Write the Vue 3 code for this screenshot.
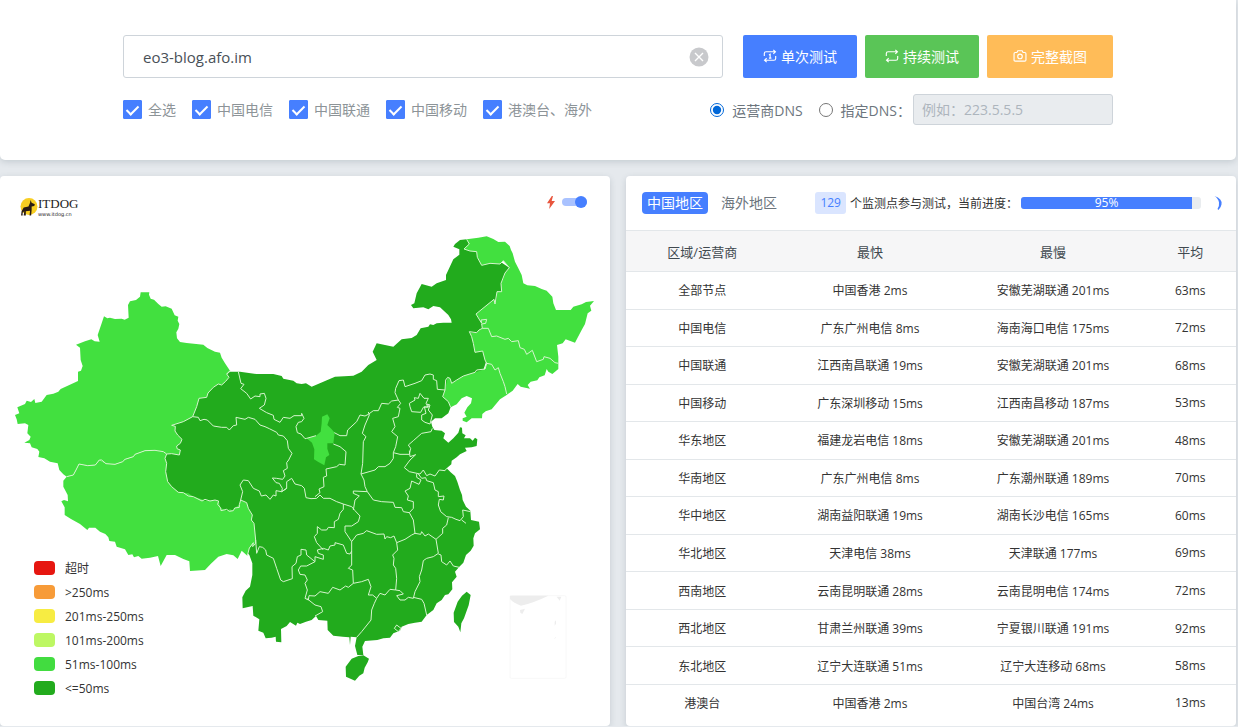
<script setup>
import { ref } from 'vue'

const host = ref('eo3-blog.afo.im')
const dns = ref('isp')
const tab = ref('cn')
const live = ref(true)
const progress = 95

const lines = ref([
  { name: '全选', on: true },
  { name: '中国电信', on: true },
  { name: '中国联通', on: true },
  { name: '中国移动', on: true },
  { name: '港澳台、海外', on: true },
])

const legend = [
  { label: '超时', cls: 'timeout' },
  { label: '>250ms', cls: 'slowest' },
  { label: '201ms-250ms', cls: 'slow' },
  { label: '101ms-200ms', cls: 'medium' },
  { label: '51ms-100ms', cls: 'good' },
  { label: '<=50ms', cls: 'best' },
]

const rows = [
  ['全部节点', '中国香港 2ms', '安徽芜湖联通 201ms', '63ms'],
  ['中国电信', '广东广州电信 8ms', '海南海口电信 175ms', '72ms'],
  ['中国联通', '江西南昌联通 19ms', '安徽芜湖联通 201ms', '68ms'],
  ['中国移动', '广东深圳移动 15ms', '江西南昌移动 187ms', '53ms'],
  ['华东地区', '福建龙岩电信 18ms', '安徽芜湖联通 201ms', '48ms'],
  ['华南地区', '广东广州电信 8ms', '广东潮州联通 189ms', '70ms'],
  ['华中地区', '湖南益阳联通 19ms', '湖南长沙电信 165ms', '60ms'],
  ['华北地区', '天津电信 38ms', '天津联通 177ms', '69ms'],
  ['西南地区', '云南昆明联通 28ms', '云南昆明电信 174ms', '72ms'],
  ['西北地区', '甘肃兰州联通 39ms', '宁夏银川联通 191ms', '92ms'],
  ['东北地区', '辽宁大连联通 51ms', '辽宁大连移动 68ms', '58ms'],
  ['港澳台', '中国香港 2ms', '中国台湾 24ms', '13ms'],
]

// Provinces answering within 50ms, drawn as one land mass
const land = [
  'M690 605L720 605 770 612 820 612 845 618 850 626 880 632 890 640 905 642 918 640 935 650 970 635 1005 620 1060 617 1085 605 1105 585 1130 570 1118 545 1130 520 1155 525 1180 530 1205 508 1235 504 1250 495 1262 475 1285 470 1290 463 1300 465 1310 460 1330 458 1355 458 1353 448 1345 435 1320 412 1300 408 1285 418 1270 412 1240 415 1233 405 1243 400 1250 370 1265 342 1295 350 1310 340 1338 330 1338 315 1345 300 1360 268 1378 254 1378 238 1360 230 1365 222 1380 210 1400 208 1528 293 1500 450 1450 600 1352 712 1345 730 1325 745 1305 745 1293 755 1297 770 1303 780 1325 782 1335 790 1330 805 1345 818 1360 805 1375 788 1380 772 1386 773 1387 790 1397 796 1392 805 1410 805 1418 812 1425 803 1432 808 1430 828 1415 832 1395 833 1400 843 1380 853 1370 862 1355 872 1354 883 1340 895 1352 907 1365 918 1372 935 1380 960 1386 975 1388 990 1398 1010 1411 1022 1413 1050 1437 1055 1440 1078 1425 1090 1420 1105 1421 1127 1412 1142 1398 1155 1390 1178 1378 1190 1365 1205 1370 1220 1356 1237 1357 1258 1345 1273 1335 1275 1325 1290 1310 1300 1300 1320 1280 1335 1265 1355 1245 1358 1225 1362 1205 1370 1200 1382 1180 1390 1170 1403 1150 1405 1132 1410 1095 1413 1087 1430 1090 1455 1072 1455 1065 1428 1070 1402 1052 1400 1050 1425 1048 1402 1028 1400 1000 1397 983 1380 982 1352 955 1350 948 1338 935 1350 918 1355 900 1362 892 1358 888 1367 870 1356 860 1368 843 1377 844 1417 828 1415 827 1400 815 1403 797 1405 790 1388 775 1382 778 1348 760 1337 758 1308 728 1315 727 1282 737 1262 750 1250 757 1215 757 1180 748 1155 650 1050 500 980 450 850 515 766 578 700Z',
  'M1055 1466L1075 1458 1090 1456 1107 1466 1103 1477 1094 1493 1090 1510 1078 1517 1065 1532 1038 1520 1037 1490Z',
  'M1400 1265L1412 1275 1406 1306 1392 1345 1384 1360 1381 1387 1375 1370 1362 1356 1361 1328 1373 1295 1386 1277Z',
]

// Provinces in the 51ms-100ms band: Xinjiang, Tibet, the north-east and Ningxia
const lighter = [
  'M45 735L58 730 52 712 75 702 80 692 93 696 103 687 106 699 125 695 140 675 160 671 175 665 182 657 234 633 234 605 243 602 248 588 242 570 240 533 228 524 255 514 274 508 284 514 299 515 293 495 305 460 312 439 322 445 330 443 345 447 365 446 374 449 386 443 384 405 390 394 408 390 420 380 422 367 448 367 447 374 452 386 462 389 475 402 485 410 497 409 515 416 524 436 535 440 533 452 538 462 535 476 529 487 531 505 540 516 560 519 610 524 622 534 645 545 660 548 665 563 675 580 690 602 680 612 687 622 677 634 665 645 655 642 640 652 624 669 620 682 597 685 590 710 578 740 550 755 515 766 526 769 525 783 533 795 546 808 541 820 530 828 531 836 541 840 538 855 515 851 500 852 490 845 465 841 435 842 405 853 400 860 375 868 368 875 345 883 318 881 298 870 286 885 263 887 237 882 228 900 220 915 200 920 190 913 178 900 173 880 150 875 133 865 115 861 118 845 112 837 95 832 90 820 73 818 88 810 92 800 82 790 85 765 75 760 53 762 50 748Z',
  'M200 920L190 932 190 950 203 975 204 994 192 990 184 994 194 1012 194 1035 213 1047 240 1062 262 1080 267 1073 286 1073 300 1085 316 1092 325 1102 328 1113 345 1115 350 1130 375 1138 385 1155 397 1153 402 1162 415 1158 425 1166 450 1163 474 1158 482 1188 500 1155 525 1155 550 1167 568 1174 570 1203 615 1200 632 1182 655 1160 680 1152 700 1156 713 1167 725 1142 742 1157 748 1134 767 1120 767 1110 762 1060 754 1050 757 1035 745 1015 740 998 722 990 718 1004 704 1014 700 1022 690 1018 680 1022 662 1014 656 993 645 990 615 993 606 988 580 980 565 970 550 968 535 965 515 950 503 935 497 905 500 880 495 865 500 852 490 845 465 841 435 842 405 853 400 860 375 868 368 875 345 883 318 881 298 870 286 885 263 887 237 882 228 900 220 915Z',
  'M1400 208L1435 203 1460 199 1480 207 1495 216 1515 215 1529 228 1533 240 1538 250 1545 275 1555 295 1565 315 1570 340 1582 346 1605 348 1625 357 1640 362 1657 380 1660 400 1668 420 1712 420 1720 410 1745 403 1758 396 1782 393 1770 407 1774 422 1763 430 1755 462 1745 480 1732 505 1725 518 1697 508 1688 520 1671 525 1675 560 1675 597 1657 612 1645 605 1640 597 1634 616 1618 622 1612 631 1592 635 1583 645 1590 656 1562 650 1553 642 1538 662 1520 675 1500 688 1475 718 1457 724 1447 732 1446 745 1415 745 1400 757 1388 752 1388 745 1400 740 1393 728 1402 712 1413 700 1416 685 1400 678 1385 685 1370 703 1352 712 1345 695 1328 680 1335 660 1343 622 1350 625 1355 640 1370 630 1390 618 1430 605 1455 597 1460 580 1453 565 1448 543 1425 547 1420 520 1415 500 1408 485 1415 488 1430 488 1437 480 1447 475 1445 460 1436 443 1428 432 1455 410 1482 388 1485 402 1490 385 1491 365 1505 365 1503 340 1512 322 1515 309 1528 293 1510 272 1500 282 1470 280 1445 286 1432 262 1430 245 1410 243 1392 237 1408 222Z',
  'M966 740L982 733 989 745 982 765 995 778 1004 788 1000 820 982 820 982 836 988 855 978 862 973 886 955 876 942 868 943 838 936 818 920 805 948 797 962 785 965 760Z',
]

// Lines shared by neighbouring provinces
const borders = [
  'M690 602L680 612 687 622 677 634 665 645 655 642 640 652 624 669 620 682 597 685 590 710 578 740 550 755 515 766 526 769 525 783 533 795 546 808 541 820 530 828 531 836 541 840 538 855 515 851 500 852',
  'M500 852L490 845 465 841 435 842 405 853 400 860 375 868 368 875 345 883 318 881 305 870 298 870 286 885 263 887 237 882 228 900 220 915 200 920',
  'M500 852L495 865 500 880 497 905 503 935 515 950 535 967 550 968 565 978 580 980 606 993 615 988 630 993 645 990 656 993 653 1003 662 1014 663 1022 680 1018 688 1024 700 1022 704 1014 718 1012 718 1004 722 990 740 998 745 1015 757 1035 754 1050 762 1060 767 1110 767 1120 758 1130 760 1118 748 1134 742 1157',
  'M715 605L723 640 732 643 722 656 740 670 752 687 765 678 780 680 780 672 793 670 798 685 793 705 778 715 800 728 820 736 822 748 840 757 850 742 870 745 882 737 905 737 905 730 912 745 905 755 895 757 888 770 892 788 903 792 915 806 920 805 948 797',
  'M578 740L595 742 600 752 612 748 622 750 640 768 665 772 680 772 688 780 700 767 710 765 708 742 735 748 745 742 765 748 780 765 795 770 808 776 830 787 835 795 850 798 862 812 865 835 876 850 866 870 860 878 862 895 850 902 855 918 848 928 830 925 817 924 828 938 838 940 847 955 845 965 860 955',
  'M722 990L728 965 720 945 730 930 745 932 760 955 778 963 784 978 798 975 810 988 820 975 828 978 828 962 845 965 860 955 860 935 875 925 885 942 905 947 913 955 918 983 933 986 950 985 960 975 970 985 990 985 1010 995 1030 1002',
  'M1000 822L1020 830 1038 845 1035 885 1018 883 1010 890 978 897 980 918 970 922 972 950 957 957 960 968 945 980',
  'M1003 788L1020 797 1040 797 1043 780 1070 755 1080 735 1095 738 1105 733 1120 722 1135 722 1145 700 1165 702 1175 693 1195 690 1185 668 1187 655 1197 632 1210 630 1215 650 1245 640 1265 632 1275 615 1290 612 1300 615 1300 628 1310 632 1312 658 1335 660',
  'M1105 726L1108 735 1095 765 1087 790 1098 800 1090 815 1088 880 1083 912 1092 930 1095 950 1102 965',
  'M1195 690L1202 700 1192 712 1200 715 1195 740 1178 745 1185 770 1175 785 1193 800 1187 830 1180 848 1180 865 1170 880 1155 890 1135 890 1125 900 1083 912',
  'M1180 848L1200 853 1228 853 1232 835 1225 825 1240 812 1265 790 1293 785 1297 775',
  'M1228 842L1230 860 1247 854 1230 870 1213 893 1228 905 1260 912 1270 900 1280 917 1290 912 1305 918 1318 900 1335 902 1340 895',
  'M1230 710L1228 700 1245 690 1243 683 1255 685 1260 670 1272 685 1285 685 1278 700 1288 710 1270 712 1262 727 1235 725Z',
  'M1273 710L1283 712 1280 702 1290 705 1285 720 1297 735 1290 762 1275 757 1265 750 1265 735 1278 730Z',
  'M1250 912L1250 922 1263 930 1257 943 1235 933 1230 955 1215 963 1225 978 1222 990 1240 995 1240 1015 1228 1028 1240 1050 1245 1090 1262 1093 1265 1085 1275 1098 1285 1092 1308 1108 1315 1150 1300 1160 1280 1165 1270 1172 1265 1200 1258 1220 1260 1235 1245 1265 1240 1285',
  'M1102 965L1120 990 1145 995 1180 997 1185 1012 1205 1013 1210 1025 1228 1028',
  'M1255 912L1265 925 1277 923 1280 932 1300 938 1305 960 1315 965 1315 980 1332 978 1330 990 1318 988 1315 1005 1322 1025 1340 1040 1355 1042 1368 1048 1380 1052 1390 1040 1388 1020 1412 1025M1385 1050L1398 1060M1345 1043L1340 1065 1328 1075 1328 1090 1308 1108',
  'M1315 1152L1323 1155 1325 1175 1340 1185 1350 1173 1360 1188 1378 1192M1240 1282L1265 1288 1272 1300 1280 1335',
  'M1240 1285L1225 1282 1215 1290 1200 1290 1190 1277 1210 1272 1200 1262 1187 1260 1170 1258 1155 1275 1140 1270 1130 1285',
  'M1245 1090L1235 1095 1215 1108 1190 1118 1193 1140 1178 1155 1182 1165 1180 1185 1187 1195 1190 1225 1187 1260M1190 1118L1182 1098 1172 1103 1160 1100 1155 1107 1152 1092 1130 1093 1100 1082 1090 1090 1070 1095 1055 1115',
  'M1130 1285L1118 1275 1105 1275 1113 1250 1105 1228 1085 1235 1060 1240 1058 1200 1045 1195 1055 1185 1055 1115M1130 1285L1123 1300 1115 1320 1113 1350 1085 1385 1070 1402',
  'M1060 1240L1045 1252 1037 1248 1020 1260 998 1252 985 1270 960 1265 945 1278 927 1277 925 1290 915 1285 922 1260 915 1240 922 1230 915 1215 900 1213 895 1200 902 1188 920 1188 945 1175',
  'M920 1285L945 1305 963 1310 968 1325 945 1338M945 1175L945 1160 970 1168 970 1155 955 1150 952 1140 970 1135 985 1140 990 1128 1005 1125 1005 1118 1030 1125 1040 1150 1050 1152 1055 1143',
  'M970 1140L950 1118 943 1100 952 1090 952 1070 965 1080 980 1080 985 1072 1003 1073 1003 1055 1015 1048 1020 1030 1030 1018 1030 1002 1055 1010 1065 1022 1080 1038 1075 1055 1055 1068 1035 1068 1035 1085 1055 1115',
  'M1060 1020L1065 990 1078 978 1060 970 1060 963 1102 965M767 1110L770 1150 778 1130 788 1132 797 1140 800 1155 820 1165 830 1195 842 1230 850 1235 877 1226 876 1190 888 1180 892 1160 903 1155 903 1138 918 1140 920 1155 945 1175',
  'M1447 475L1465 475 1475 500 1490 498 1515 508 1525 505 1535 515 1555 512 1560 533 1573 538 1580 553 1597 541 1610 575 1630 568 1632 560 1650 565 1665 578 1675 580',
  'M1460 580L1475 583 1485 600 1495 593 1500 610 1510 635 1515 650 1520 672',
  'M1400 208L1408 222 1392 237 1410 243 1430 245 1432 262 1445 286 1470 280 1500 282 1510 272 1528 293 1515 309 1503 340 1505 365 1491 365 1485 402 1482 388 1455 410 1428 432 1445 460 1443 450 1460 448 1457 460 1445 462 1447 475 1437 480 1430 488 1408 485 1415 500 1420 520 1425 547 1448 543 1455 570 1460 580 1455 597 1430 600 1425 607 1390 618 1370 630 1355 640 1350 625 1343 622 1337 630 1335 660 1328 680 1345 695 1352 712',
  'M1183 1375L1190 1365 1203 1375 1195 1385Z',
]
</script>

<template>
  <div class="page">
    <form class="card query" @submit.prevent>
      <div class="query-inner">
        <div class="row main-row">
          <div class="host">
            <input v-model="host" class="host-input" type="text" aria-label="host" />
            <button class="clear" type="button" aria-label="clear" @click="host = ''">
              <svg viewBox="0 0 20 20" width="20" height="20">
                <circle cx="10" cy="10" r="9.5" fill="#c8c9cc" />
                <path d="M6 6l8 8M14 6l-8 8" stroke="#fff" stroke-width="1.4" />
              </svg>
            </button>
          </div>
          <div class="buttons">
            <button class="btn blue" type="submit">
              <svg class="ico" viewBox="0 0 16 16">
                <path d="M1.5 8V5.2q0-2 2-2H14M11.8 1l2.4 2.2-2.4 2.2M14.5 8v2.8q0 2-2 2H2M4.2 10.6l-2.4 2.2 2.4 2.2M6.8 6.8L8.2 6v4.5M6.8 10.5h2.8" />
              </svg>
              单次测试
            </button>
            <button class="btn green" type="button">
              <svg class="ico" viewBox="0 0 16 16">
                <path d="M1.5 8V5.2q0-2 2-2H14M11.8 1l2.4 2.2-2.4 2.2M14.5 8v2.8q0 2-2 2H2M4.2 10.6l-2.4 2.2 2.4 2.2" />
              </svg>
              持续测试
            </button>
            <button class="btn orange" type="button">
              <svg class="ico" viewBox="0 0 16 16">
                <path d="M2.5 4h2l1-2h5l1 2h2q1.3 0 1.3 1.3v7.2q0 1.3-1.3 1.3h-11q-1.3 0-1.3-1.3V5.3Q1.2 4 2.5 4z" />
                <circle cx="8" cy="8.5" r="2.6" />
              </svg>
              完整截图
            </button>
          </div>
        </div>
        <div class="row option-row">
          <div class="checks">
            <label v-for="l in lines" :key="l.name" class="check">
              <input v-model="l.on" type="checkbox" />
              <span>{{ l.name }}</span>
            </label>
          </div>
          <div class="dns">
            <label class="radio"><input v-model="dns" type="radio" name="dns" value="isp" /><span>运营商DNS</span></label>
            <label class="radio"><input v-model="dns" type="radio" name="dns" value="custom" /><span>指定DNS：</span></label>
            <input class="dns-input" type="text" placeholder="例如：223.5.5.5" aria-label="DNS" :disabled="dns === 'isp'" />
          </div>
        </div>
      </div>
    </form>

    <div class="panels">
      <section class="card map-card">
        <svg class="map" viewBox="0 18 1830 1650" role="img" aria-label="China">
          <g class="best-land"><path v-for="d in land" :key="d" :d="d" /></g>
          <g class="good-land"><path v-for="d in lighter" :key="d" :d="d" /></g>
          <g class="borders"><path v-for="d in borders" :key="d" :d="d" /></g>
          <g class="inset">
            <rect x="1530" y="1277" width="168" height="248" rx="4" />
            <path d="M1530 1277h115q-45 22-82 30-22-8-33-20zM1560 1320l15-4-8 16-6-4zM1670 1280h14l-5 12zM1664 1355l4-4v10l-4 6zM1662 1408l5-8v4z" />
          </g>
        </svg>
        <div class="map-head">
          <div class="logo">
            <svg viewBox="0 0 34 34" width="18" height="18">
              <circle cx="17" cy="16" r="16" fill="#f8ce22" />
              <path d="M20 4l2 5 6 3-1 3-5 1v6l-1 11h-3l1-9-8 1v8H7l1-8-3 3v5H2l1-8 4-7 9-2 3-7z" fill="#2a1b12" />
            </svg>
            <div class="logo-text">
              <span class="logo-name">ITDOG</span>
              <span class="logo-site">www.itdog.cn</span>
            </div>
          </div>
          <label class="live">
            <svg viewBox="0 0 8 13" width="8" height="13"><path d="M4.8 0L0 7.3h3L2.2 13 8 5H4.7L6 0z" fill="#e8553d" /></svg>
            <input v-model="live" type="checkbox" class="switch" aria-label="live" />
          </label>
        </div>
        <ul class="legend">
          <li v-for="l in legend" :key="l.label"><i :class="l.cls"></i>{{ l.label }}</li>
        </ul>
      </section>

      <section class="card result">
        <header class="result-head">
          <div class="tabs">
            <button type="button" :class="['tab', { active: tab === 'cn' }]" @click="tab = 'cn'">中国地区</button>
            <button type="button" :class="['tab', { active: tab === 'abroad' }]" @click="tab = 'abroad'">海外地区</button>
          </div>
          <div class="status">
            <span class="count">129</span>
            <span class="status-text">个监测点参与测试，当前进度：</span>
            <div class="bar"><div class="fill" :style="{ width: progress + '%' }">{{ progress }}%</div></div>
            <svg class="spin" viewBox="0 0 14 14" width="14" height="14">
              <path d="M5.500 0Q13.500 2.500 12.500 8.500 12 11.500 9.500 14L8.500 13Q10.500 9.500 10 6.500 9.300 2.500 5.500 0z" />
            </svg>
          </div>
        </header>
        <table>
          <thead>
            <tr><th>区域/运营商</th><th>最快</th><th>最慢</th><th>平均</th></tr>
          </thead>
          <tbody>
            <tr v-for="r in rows" :key="r[0]"><td v-for="(c, i) in r" :key="i">{{ c }}</td></tr>
          </tbody>
        </table>
      </section>
    </div>
  </div>
</template>

<style>
body {
  background: #e5e9ed;
}
</style>

<style scoped>
.page {
  font-family: "Open Sans", "Noto Sans CJK SC", sans-serif;
  font-size: 12px;
  color: #333;
  padding-right: 2px;
}
.page * {
  box-sizing: border-box;
}
button,
input {
  font: inherit;
}
button {
  border: 0;
  padding: 0;
  cursor: pointer;
}
.card {
  background: #fff;
  border-radius: 4px;
  box-shadow: 0 2px 6px rgba(70, 90, 100, 0.2);
}
.query {
  border-radius: 0 0 5px 5px;
  padding: 35px 16px;
}
.query-inner {
  max-width: 990px;
  margin: 0 auto;
}
.row {
  display: flex;
  align-items: center;
  justify-content: space-between;
}
.main-row {
  gap: 20px;
}
.host {
  flex: 1;
  display: flex;
  align-items: center;
  height: 43px;
  border: 1px solid #ced4da;
  border-radius: 3px;
  padding: 0 13px 0 19px;
}
.host-input {
  flex: 1;
  border: 0;
  outline: 0;
  padding: 0;
  font-size: 15px;
  color: #495057;
  background: none;
}
.clear {
  background: none;
  height: 20px;
}
.buttons {
  display: flex;
  gap: 8px;
}
.btn {
  display: flex;
  align-items: center;
  gap: 4px;
  height: 43px;
  padding: 0 20px 1px;
  border-radius: 2px;
  color: #fff;
  font-size: 14px;
}
.blue { background: #467fff; }
.green { background: #5ac557; }
.orange { background: #ffbc58; padding: 0 26px 1px; }
.ico {
  width: 14px;
  height: 14px;
  fill: none;
  stroke: #fff;
  stroke-width: 1.3;
}
.option-row {
  margin-top: 16px;
  font-size: 14px;
}
.checks,
.dns {
  display: flex;
  align-items: center;
}
.checks {
  gap: 16px;
  color: #8d9498;
}
.check {
  display: flex;
  align-items: center;
  gap: 6px;
  line-height: 20px;
}
.check input {
  appearance: none;
  display: grid;
  place-items: center;
  width: 19px;
  height: 19px;
  margin: 0;
  border: 1px solid #467fff;
  border-radius: 1px;
}
.check input:checked {
  background: #467fff;
}
.check input:checked::before {
  content: "";
  width: 5px;
  height: 10px;
  border: solid #fff;
  border-width: 0 2px 2px 0;
  transform: translateY(-1px) rotate(45deg);
}
.dns {
  color: #6c757d;
}
.radio {
  display: flex;
  align-items: center;
  gap: 8px;
  margin-right: 16px;
}
.radio + .radio {
  margin-right: 2px;
}
.radio input {
  width: 14px;
  height: 14px;
  margin: 0;
  accent-color: #0067d8;
}
.dns-input {
  width: 200px;
  height: 31px;
  padding: 0 8px;
  border: 1px solid #ced4da;
  border-radius: 3px;
  background: #e9ecef;
}
.dns-input::placeholder {
  color: #adb5bd;
}
.panels {
  display: grid;
  grid-template-columns: 1fr 1fr;
  gap: 16px;
  margin-top: 16px;
}
.map-card {
  position: relative;
}
.map {
  display: block;
  width: 100%;
}
.best-land { fill: #22ab1d; }
.good-land { fill: #42e03f; }
.borders {
  fill: none;
  stroke: #d5f5cd;
  stroke-width: 3;
  stroke-linejoin: round;
}
.inset rect {
  fill: none;
  stroke: #f8f8f8;
  stroke-width: 3;
}
.inset path {
  fill: #ededed;
}
.map-head {
  position: absolute;
  top: 16px;
  left: 20px;
  right: 23px;
  display: flex;
  justify-content: space-between;
}
.logo {
  display: flex;
  align-items: center;
  margin-top: 4px;
}
.logo-text {
  display: flex;
  flex-direction: column;
  color: #222;
}
.logo-name {
  font: 13px/15px "Liberation Serif", serif;
}
.logo-site {
  font: 5px/6px "DejaVu Sans", sans-serif;
}
.live {
  display: flex;
  align-items: center;
  gap: 7px;
  height: 20px;
}
.switch {
  appearance: none;
  display: flex;
  align-items: center;
  width: 25px;
  height: 8px;
  margin: 0;
  border-radius: 4px;
  background: #a9c2ff;
}
.switch::before {
  content: "";
  width: 12px;
  height: 12px;
  border-radius: 6px;
  background: #467fff;
}
.switch:checked::before {
  margin-left: auto;
}
.legend {
  position: absolute;
  left: 34px;
  bottom: 26px;
  margin: 0;
  padding: 0;
  list-style: none;
}
.legend li {
  display: flex;
  align-items: center;
  gap: 10px;
  height: 24px;
}
.legend i {
  width: 21px;
  height: 14px;
  border-radius: 4px;
}
.timeout { background: #e61610; }
.slowest { background: #f79b38; }
.slow { background: #f7ec42; }
.medium { background: #bdf763; }
.good { background: #42dc40; }
.best { background: #22ab1d; }
.result {
  overflow: hidden;
}
.result-head {
  display: flex;
  align-items: center;
  justify-content: space-between;
  height: 54px;
  padding: 0 13px 0 16px;
}
.tabs {
  display: flex;
  gap: 8px;
}
.tab {
  height: 22px;
  padding: 0 5px;
  border-radius: 4px;
  background: none;
  color: #6c757d;
  font-size: 14px;
  line-height: 22px;
}
.tab.active {
  background: #467fff;
  color: #fff;
}
.status {
  display: flex;
  align-items: center;
}
.count {
  padding: 0 5px;
  margin-right: 4px;
  border-radius: 3px;
  background: #dae5ff;
  color: #467fff;
  line-height: 22px;
}
.bar {
  width: 180px;
  height: 12px;
  margin: 0 8px 0 3px;
  border-radius: 3px;
  background: #e9ecef;
}
.fill {
  height: 12px;
  border-radius: 3px 0 0 3px;
  background: #467fff;
  color: #fff;
  text-align: center;
  line-height: 12px;
}
.spin {
  fill: #467fff;
}
table {
  width: 100%;
  height: 491px;
  border-collapse: collapse;
  table-layout: fixed;
  text-align: center;
}
th {
  width: 30%;
  height: 41px;
  padding: 0;
  border: solid #e3e7ea;
  border-width: 1px 0;
  background: #f6f6f7;
  color: #40494f;
  font-size: 13px;
  font-weight: 400;
}
th:first-child { width: 25%; }
th:last-child { width: 15%; }
td {
  padding: 0;
  border-bottom: 1px solid #e3e7ea;
}
tr:last-child td {
  border-bottom: 0;
}
</style>
